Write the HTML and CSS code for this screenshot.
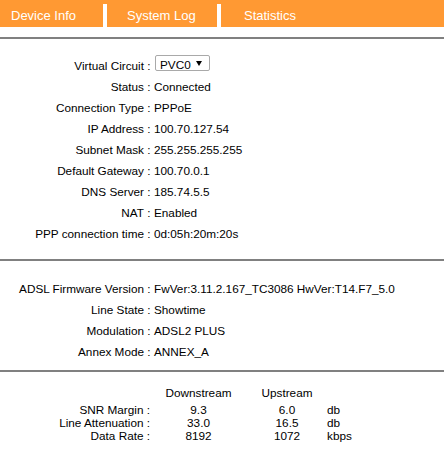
FILE: index.html
```html
<!DOCTYPE html>
<html lang="en">
    <head>
        <meta charset="UTF-8">
        <meta name="viewport" content="width=device-width, initial-scale=1.0">
        <title>Device Info</title>
        <link rel="stylesheet" href="styles.css">
    </head>
    <body>
        <div class="tabs">
            <div class="tab tab-device">Device Info</div>
            <div class="tab tab-log">System Log</div>
            <div class="tab tab-stats">Statistics</div>
        </div>
        <div class="divider"></div>

        <!-- connection -->
        <div class="info info-wan">
            <div class="label">Virtual Circuit</div><div class="colon">:</div>
            <div class="value">
                <div class="select-box">
                    <span>PVC0</span>
                    <svg class="arrow" width="6" height="5" viewBox="0 0 6 5"><polygon points="0,0 6,0 3,5" fill="#000"/></svg>
                </div>
            </div>
            <div class="label">Status</div><div class="colon">:</div><div class="value">Connected</div>
            <div class="label">Connection Type</div><div class="colon">:</div><div class="value">PPPoE</div>
            <div class="label">IP Address</div><div class="colon">:</div><div class="value">100.70.127.54</div>
            <div class="label">Subnet Mask</div><div class="colon">:</div><div class="value">255.255.255.255</div>
            <div class="label">Default Gateway</div><div class="colon">:</div><div class="value">100.70.0.1</div>
            <div class="label">DNS Server</div><div class="colon">:</div><div class="value">185.74.5.5</div>
            <div class="label">NAT</div><div class="colon">:</div><div class="value">Enabled</div>
            <div class="label">PPP connection time</div><div class="colon">:</div><div class="value">0d:05h:20m:20s</div>
        </div>
        <div class="divider"></div>

        <!-- adsl -->
        <div class="info info-adsl">
            <div class="label">ADSL Firmware Version</div><div class="colon">:</div><div class="value">FwVer:3.11.2.167_TC3086 HwVer:T14.F7_5.0</div>
            <div class="label">Line State</div><div class="colon">:</div><div class="value">Showtime</div>
            <div class="label">Modulation</div><div class="colon">:</div><div class="value">ADSL2 PLUS</div>
            <div class="label">Annex Mode</div><div class="colon">:</div><div class="value">ANNEX_A</div>
        </div>
        <div class="divider"></div>

        <!-- line stats -->
        <div class="stats">
            <div></div><div class="num">Downstream</div><div class="num">Upstream</div><div></div>
            <div class="label">SNR Margin :</div><div class="num">9.3</div><div class="num">6.0</div><div>db</div>
            <div class="label">Line Attenuation :</div><div class="num">33.0</div><div class="num">16.5</div><div>db</div>
            <div class="label">Data Rate :</div><div class="num">8192</div><div class="num">1072</div><div>kbps</div>
        </div>
    </body>
</html>
```

FILE: styles.css
```css
*{
    margin: 0;
    padding: 0;
    box-sizing: border-box;
}
body{
    font-family: "Liberation Sans", Arial, sans-serif;
    font-size: 11.75px;
    color: #000;
    background-color: #fff;
}
.tabs{
    display: flex;
    gap: 4px;
    height: 27px;
    border-top: 4px solid #ff9933;
}
.tab{
    background-color: #ff9933;
    color: #fff;
    font-size: 13px;
    line-height: 23px;
    white-space: nowrap;
}
.tab-device{
    width: 103px;
    padding-left: 11px;
}
.tab-log{
    width: 110px;
    padding-left: 20px;
}
.tab-stats{
    flex: 1;
    padding-left: 23px;
}
.divider{
    height: 2px;
    background-color: #808080;
}
.tabs + .divider{
    margin-top: 10px;
}
.info{
    display: grid;
    grid-template-columns: 144px 10px auto;
    grid-auto-rows: 21px;
    line-height: 21px;
    white-space: nowrap;
}
.info-wan{
    padding: 16px 0 15px;
}
.info-adsl{
    padding: 17px 0 8px;
}
.label{
    text-align: right;
}
.colon{
    text-align: center;
}
.select-box{
    display: flex;
    align-items: flex-start;
    width: 55px;
    height: 16px;
    margin-left: 1px;
    padding: 2px 7px 0 4px;
    line-height: 13px;
    border: 1px solid #a9a9a9;
    border-radius: 2px;
}
.select-box .arrow{
    margin: 3px 0 0 auto;
}
.stats{
    display: grid;
    grid-template-columns: 150px 97px 80px auto;
    grid-template-rows: 17px repeat(3, 13px);
    line-height: 13px;
    padding-top: 14px;
    white-space: nowrap;
}
.num{
    text-align: center;
}
```
